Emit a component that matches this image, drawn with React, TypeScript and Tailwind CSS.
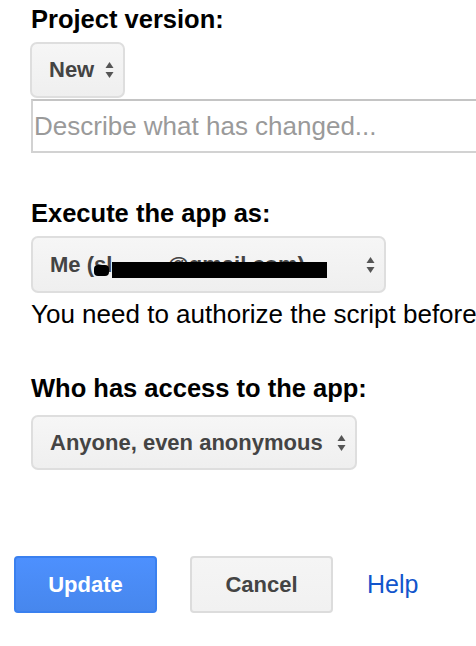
import React from "react";

function Arrows() {
  return (
    <svg className="w-[9px] h-[20px] shrink-0" viewBox="0 0 9 20" fill="#555">
      <path d="M4.5 2 L8.5 8 L0.5 8 Z" />
      <path d="M0.5 12 L8.5 12 L4.5 18 Z" />
    </svg>
  );
}

interface SelectBoxProps {
  width: string;
  children: React.ReactNode;
}

function SelectBox({ width, children }: SelectBoxProps) {
  return (
    <div
      className={`relative flex items-center justify-between gap-[8px] pl-[17px] pr-[9px] rounded-[7px] border-2 border-[#dedede] bg-gradient-to-b from-[#f6f6f6] to-[#efefef] text-[#444] font-bold text-[22px] leading-[28px] whitespace-nowrap ${width}`}
    >
      {children}
      <Arrows />
    </div>
  );
}

export default function App() {
  return (
    <div className="w-[476px] h-[646px] overflow-hidden bg-white font-['Liberation_Sans',Arial,sans-serif] text-black">
      <div className="pl-[31px] pt-[4px]">
        <h2 className="text-[25.5px] leading-[30px] font-bold">Project version:</h2>

        <SelectBox width="w-[95px] h-[56px] mt-[8px] -ml-[1px]">
          <span>New</span>
        </SelectBox>

        <input
          className="block mt-[1px] w-[470px] h-[54px] border-2 border-[#d2d2d2] border-t-[#c4c4c4] pl-[1px] text-[26px] outline-none placeholder:text-[#9a9a9a]"
          placeholder="Describe what has changed..."
        />

        <h2 className="mt-[45px] text-[25.5px] leading-[30px] font-bold">Execute the app as:</h2>

        <SelectBox width="w-[355px] h-[57px] mt-[8px]">
          <span>Me (sl&nbsp;&nbsp;&nbsp;&nbsp;&nbsp;&nbsp;&nbsp;&nbsp;&nbsp;@gmail.com)</span>
          <span className="absolute left-[61px] top-[27px] w-[15px] h-[11px] rounded-[4px] bg-black" />
          <span className="absolute left-[79px] top-[24px] w-[215px] h-[16px] bg-black" />
        </SelectBox>

        <p className="mt-[6px] text-[26px] leading-[30px] whitespace-nowrap">
          You need to authorize the script before
        </p>

        <h2 className="mt-[44px] text-[25.5px] leading-[30px] font-bold">Who has access to the app:</h2>

        <SelectBox width="w-[326px] h-[55px] mt-[12px]">
          <span>Anyone, even anonymous</span>
        </SelectBox>
      </div>

      <div className="flex items-center pl-[14px] mt-[86px]">
        <button className="w-[143px] h-[57px] rounded-[4px] border-2 border-[#3a80ef] bg-gradient-to-b from-[#4d90fe] to-[#4787ed] text-white font-bold text-[22px]">
          Update
        </button>
        <button className="ml-[33px] w-[143px] h-[57px] rounded-[4px] border-2 border-[#dcdcdc] bg-gradient-to-b from-[#f5f5f5] to-[#f1f1f1] text-[#444] font-bold text-[22px]">
          Cancel
        </button>
        <a className="ml-[34px] text-[25px] text-[#1155cc]" href="#">
          Help
        </a>
      </div>
    </div>
  );
}
